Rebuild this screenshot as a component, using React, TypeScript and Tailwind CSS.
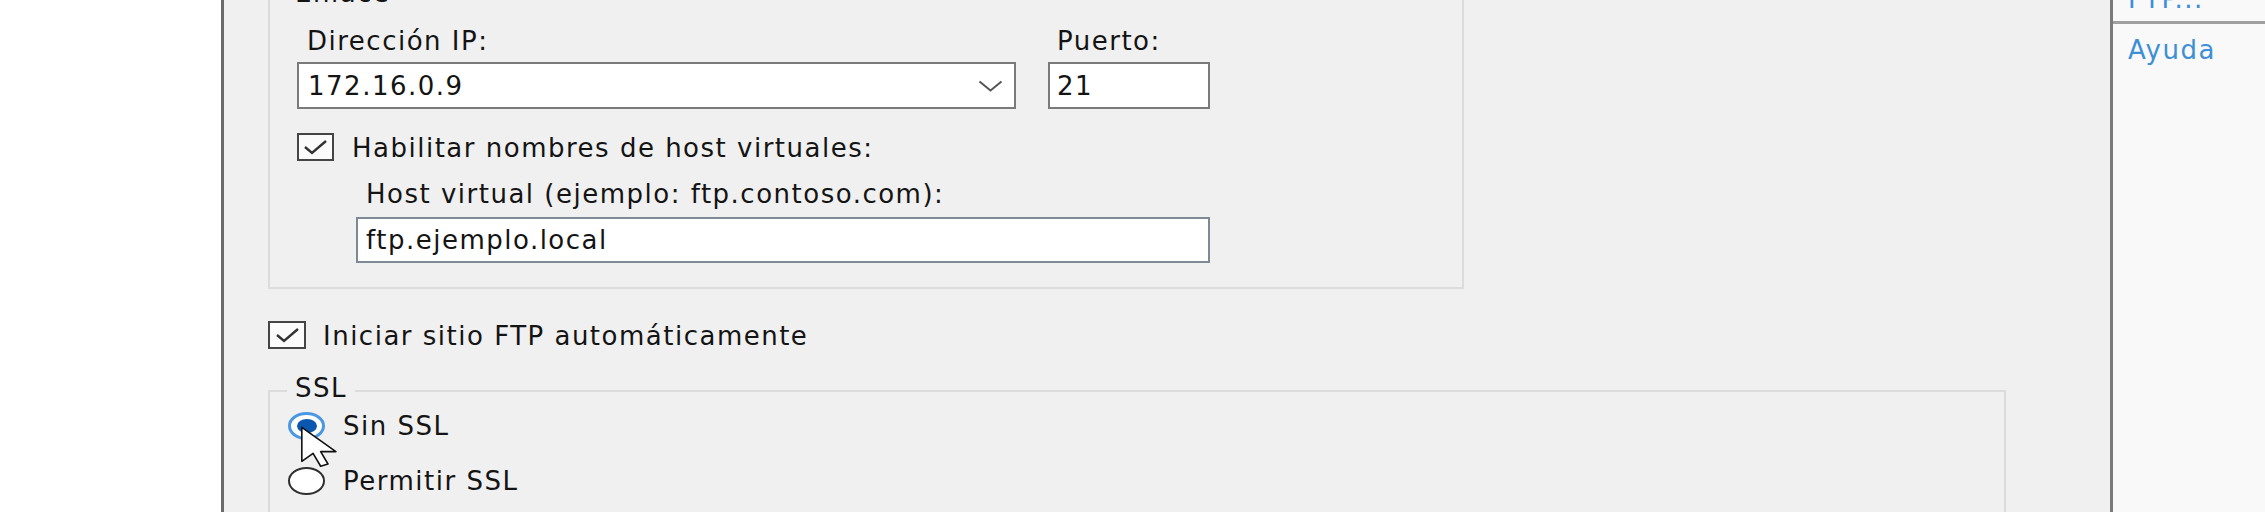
import React from "react";

const txt =
  "font-['DejaVu_Sans',sans-serif] text-[26px] tracking-[1.5px] leading-[30px] text-[#141414] whitespace-nowrap";
const link =
  "font-['DejaVu_Sans',sans-serif] text-[26px] tracking-[1.5px] leading-[30px] text-[#3d8fd6] whitespace-nowrap";

function CheckMark() {
  return (
    <svg width="27" height="18" viewBox="0 0 27 18">
      <polyline points="3,9 10,15 24,3" fill="none" stroke="#333333" strokeWidth="2.4" />
    </svg>
  );
}

function CheckBox({ w }: { w: string }) {
  return (
    <div className={`${w} h-[28px] shrink-0 border-2 border-[#454545] bg-[#fbfbfb] flex items-center justify-center`}>
      <CheckMark />
    </div>
  );
}

function Radio({ on }: { on?: boolean }) {
  return on ? (
    <div className="w-[37px] h-[28px] shrink-0 rounded-[50%] border-[3px] border-[#4a97e4] bg-white flex items-center justify-center">
      <div className="w-[20px] h-[14px] rounded-[50%] bg-[#0b57b0]" />
    </div>
  ) : (
    <div className="w-[37px] h-[28px] shrink-0 rounded-[50%] border-2 border-[#2f2f2f] bg-white" />
  );
}

function Cursor() {
  return (
    <svg
      className="absolute left-[300px] top-[426px]"
      width="38"
      height="42"
      viewBox="0 0 12.5 19"
      preserveAspectRatio="none"
    >
      <path
        d="M0.6,0.6 L0.6,16 L4.3,12.4 L6.8,18.2 L9.2,17.2 L6.8,11.6 L11.8,11.6 Z"
        fill="#ffffff"
        stroke="#111111"
        strokeWidth="1.6"
        vectorEffect="non-scaling-stroke"
        strokeLinejoin="round"
      />
    </svg>
  );
}

export default function App() {
  return (
    <div className="relative w-[2265px] h-[512px] overflow-hidden flex bg-white">
      <div className="w-[221px] shrink-0 bg-white" />

      <div className="w-[1889px] shrink-0 border-l-[3px] border-[#6b6b6b] bg-[#f0f0f0] pl-[44px] flex flex-col items-start">
        {/* Enlace group */}
        <div className="w-[1196px] border-x-2 border-b-2 border-[#dcdcdc] pl-[27px] pb-[24px] flex flex-col items-start">
          <div className={`${txt} -mt-[22px] h-[30px] -ml-[2px]`}>Enlace</div>

          <div className="mt-[18px] flex">
            <div className="w-[719px] flex flex-col">
              <div className={`${txt} h-[30px] pl-[10px]`}>Dirección IP:</div>
              <div className="mt-[6px] h-[47px] border-2 border-[#7a7a7a] bg-white flex items-center justify-between pl-[9px] pr-[11px]">
                <span className={txt}>172.16.0.9</span>
                <svg width="25" height="12" viewBox="0 0 25 12">
                  <polyline points="1.5,1.5 12.5,10.5 23.5,1.5" fill="none" stroke="#555555" strokeWidth="2" />
                </svg>
              </div>
            </div>
            <div className="ml-[32px] w-[162px] flex flex-col">
              <div className={`${txt} h-[30px] pl-[9px]`}>Puerto:</div>
              <div className="mt-[6px] h-[47px] border-2 border-[#7a7a7a] bg-white flex items-center pl-[7px]">
                <span className={txt}>21</span>
              </div>
            </div>
          </div>

          <div className="mt-[24px] flex items-start gap-[18px]">
            <CheckBox w="w-[37px]" />
            <div className={`${txt} h-[30px]`}>Habilitar nombres de host virtuales:</div>
          </div>

          <div className={`${txt} mt-[16px] h-[30px] pl-[69px]`}>
            Host virtual (ejemplo: ftp.contoso.com):
          </div>
          <div className="mt-[8px] ml-[59px] w-[854px] h-[46px] border-2 border-[#7d8a96] bg-white flex items-center pl-[8px]">
            <span className={txt}>ftp.ejemplo.local</span>
          </div>
        </div>

        {/* Start automatically */}
        <div className="mt-[32px] flex items-start gap-[17px]">
          <CheckBox w="w-[38px]" />
          <div className={`${txt} h-[30px]`}>Iniciar sitio FTP automáticamente</div>
        </div>

        {/* SSL group */}
        <div className="mt-[39px] w-[1738px] border-t-2 border-x-2 border-[#dcdcdc] pb-[60px] flex flex-col items-start">
          <div className={`${txt} -mt-[19px] ml-[17px] h-[30px] px-[8px] bg-[#f0f0f0]`}>SSL</div>
          <div className="mt-[8px] ml-[18px] flex items-center gap-[18px]">
            <Radio on />
            <div className={`${txt} h-[30px]`}>Sin SSL</div>
          </div>
          <div className="mt-[25px] ml-[18px] flex items-center gap-[18px]">
            <Radio />
            <div className={`${txt} h-[30px]`}>Permitir SSL</div>
          </div>
        </div>
      </div>

      {/* Right actions panel */}
      <div className="flex-1 border-l-[3px] border-[#7a7a7a] bg-[#f9f9f9] flex flex-col">
        <div className={`${link} -mt-[16px] h-[30px] pl-[15px]`}>FTP...</div>
        <div className="mt-[7px] h-[3px] bg-[#a0a0a0]" />
        <div className={`${link} mt-[11px] h-[30px] pl-[15px]`}>Ayuda</div>
      </div>

      <Cursor />
    </div>
  );
}
